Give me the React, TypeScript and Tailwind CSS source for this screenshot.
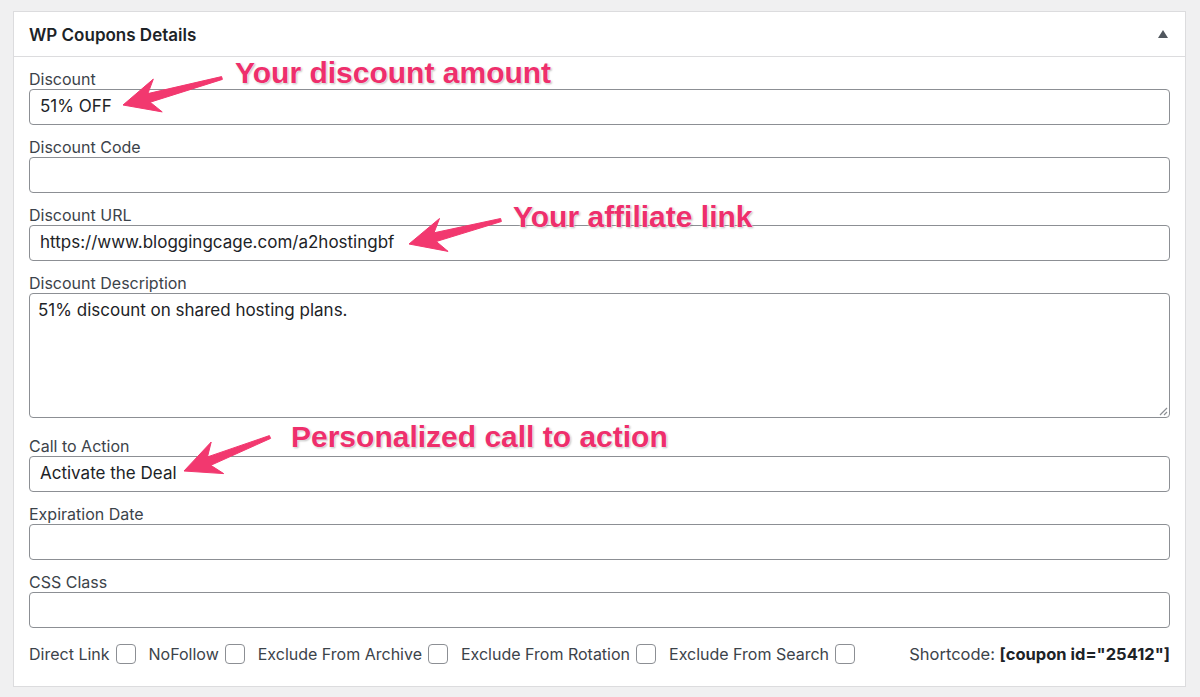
import React from 'react';

type Pt = [number, number];

// tapered arrow from tail to tip, head swept back
const arrowPath = (tail: Pt, tip: Pt) => {
  const dx = tip[0] - tail[0];
  const dy = tip[1] - tail[1];
  const len = Math.hypot(dx, dy);
  const ux = dx / len;
  const uy = dy / len;
  const px = -uy;
  const py = ux;
  const headLen = 36;
  const headHalf = 17;
  const neck = 27;
  const base: Pt = [tip[0] - ux * headLen, tip[1] - uy * headLen];
  const joint: Pt = [tip[0] - ux * neck, tip[1] - uy * neck];
  const p = (x: number, y: number) => `${x.toFixed(1)} ${y.toFixed(1)}`;
  return [
    'M', p(tail[0] + px * 1.5, tail[1] + py * 1.5),
    'L', p(joint[0] + px * 4.5, joint[1] + py * 4.5),
    'L', p(base[0] + px * headHalf, base[1] + py * headHalf),
    'L', p(tip[0], tip[1]),
    'L', p(base[0] - px * headHalf, base[1] - py * headHalf),
    'L', p(joint[0] - px * 4.5, joint[1] - py * 4.5),
    'L', p(tail[0] - px * 1.5, tail[1] - py * 1.5),
    'Z',
  ].join(' ');
};

const arrows: { tail: Pt; tip: Pt }[] = [
  { tail: [221, 77], tip: [122, 104] },
  { tail: [500, 219], tip: [408, 243] },
  { tail: [269, 436], tip: [183, 470] },
];

const notes = [
  { text: 'Your discount amount', left: 234, top: 57 },
  { text: 'Your affiliate link', left: 512, top: 201 },
  { text: 'Personalized call to action', left: 290, top: 421 },
];

const Field = ({ label, value, last }: { label: string; value?: string; last?: boolean }) => (
  <div className={last ? '' : 'mb-3'}>
    <div className="text-[16px] leading-5 text-[#3c434a]">{label}</div>
    <div className="h-[36px] rounded-[4px] border border-[#8c8f94] bg-white px-[10px] flex items-center text-[17px] text-[#1d2327]">
      {value}
    </div>
  </div>
);

const Check = ({ label }: { label: string }) => (
  <div className="flex items-center gap-[6px] mr-[13px]">
    <span>{label}</span>
    <span className="w-[20px] h-[20px] rounded-[4px] border border-[#8c8f94] bg-white" />
  </div>
);

export default function App() {
  return (
    <div className="w-[1200px] h-[697px] bg-[#f0f0f1] pt-[11px] pl-[13px] pr-[14px] font-['Inter','Liberation_Sans',sans-serif]">
      <div className="relative bg-white border border-[#dcdcde] h-[676px]">
        {/* header */}
        <div className="h-[45px] border-b border-[#dcdcde] flex items-center justify-between px-[15px]">
          <h2 className="mt-[3px] text-[17px] font-semibold text-[#1d2327]">WP Coupons Details</h2>
          <svg width="12" height="10" viewBox="0 0 12 10" className="mr-[1px]">
            <path d="M6 1 L11 9 L1 9 Z" fill="#50575e" />
          </svg>
        </div>

        {/* body */}
        <div className="px-[15px] pt-[12px]">
          <Field label="Discount" value="51% OFF" />
          <Field label="Discount Code" />
          <Field label="Discount URL" value="https://www.bloggingcage.com/a2hostingbf" />
          <div className="mb-[18px]">
            <div className="text-[16px] leading-5 text-[#3c434a]">Discount Description</div>
            <div className="relative h-[125px] rounded-[4px] border border-[#8c8f94] bg-white px-[8px] pt-[4px] text-[17px] text-[#1d2327]">
              51% discount on shared hosting plans.
              <svg width="10" height="10" viewBox="0 0 10 10" className="absolute right-[1px] bottom-[1px]">
                <path d="M9 2 L2 9 M9 6 L6 9" stroke="#8c8f94" strokeWidth="1.2" />
              </svg>
            </div>
          </div>
          <Field label="Call to Action" value="Activate the Deal" />
          <Field label="Expiration Date" />
          <Field label="CSS Class" last />

          <div className="mt-[14px] flex items-center justify-between text-[16px] text-[#3c434a]">
            <div className="flex items-center">
              <Check label="Direct Link" />
              <Check label="NoFollow" />
              <Check label="Exclude From Archive" />
              <Check label="Exclude From Rotation" />
              <Check label="Exclude From Search" />
            </div>
            <div className="text-[16.5px] text-[#3c434a]">
              Shortcode: <span className="font-bold text-[#1d2327]">[coupon id="25412"]</span>
            </div>
          </div>
        </div>

        {/* annotations */}
        <svg className="absolute -left-[13px] -top-[11px] pointer-events-none" width="1200" height="697">
          {arrows.map((a, i) => (
            <path
              key={i}
              d={arrowPath(a.tail, a.tip)}
              fill="#f2386f"
              stroke="#f2386f"
              strokeWidth="1"
              strokeLinejoin="round"
            />
          ))}
        </svg>
        {notes.map((n) => (
          <div
            key={n.text}
            className="absolute whitespace-nowrap font-['Liberation_Sans',Arial,sans-serif] font-bold text-[30px] leading-none text-[#ee2f6c] [text-shadow:0_0_2px_#fff,0_0_2px_#fff,1px_1px_2px_rgba(0,0,0,0.35)]"
            style={{ left: n.left - 13, top: n.top - 11 }}
          >
            {n.text}
          </div>
        ))}
      </div>
    </div>
  );
}
